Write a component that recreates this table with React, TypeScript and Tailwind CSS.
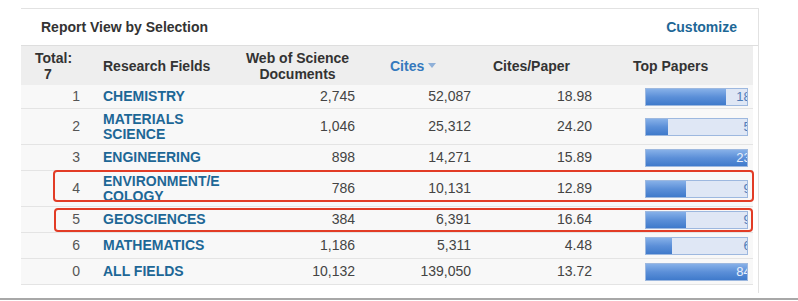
import React from "react";

interface FieldRow {
  idx: string;
  name: string[];
  docs: string;
  cites: string;
  perPaper: string;
  top: string;
  fill: number;
  height: string;
  mark?: "tall" | "short";
}

const rows: FieldRow[] = [
  { idx: "1", name: ["CHEMISTRY"], docs: "2,745", cites: "52,087", perPaper: "18.98", top: "184", fill: 80, height: "h-[24px]" },
  { idx: "2", name: ["MATERIALS", "SCIENCE"], docs: "1,046", cites: "25,312", perPaper: "24.20", top: "55", fill: 22, height: "h-[36px]" },
  { idx: "3", name: ["ENGINEERING"], docs: "898", cites: "14,271", perPaper: "15.89", top: "238", fill: 103, height: "h-[26px]" },
  { idx: "4", name: ["ENVIRONMENT/E", "COLOGY"], docs: "786", cites: "10,131", perPaper: "12.89", top: "91", fill: 40, height: "h-[36px]", mark: "tall" },
  { idx: "5", name: ["GEOSCIENCES"], docs: "384", cites: "6,391", perPaper: "16.64", top: "94", fill: 40, height: "h-[26px]", mark: "short" },
  { idx: "6", name: ["MATHEMATICS"], docs: "1,186", cites: "5,311", perPaper: "4.48", top: "65", fill: 26, height: "h-[26px]" },
  { idx: "0", name: ["ALL FIELDS"], docs: "10,132", cites: "139,050", perPaper: "13.72", top: "841", fill: 103, height: "h-[26px]" },
];

const cols = "grid grid-cols-[65px_154px_120px_120px_120px_153px]";

const Bar = ({ fill, label }: { fill: number; label: string }) => (
  <div className="relative h-[18px] w-[103px] overflow-hidden border border-[#9db8df] bg-[#dfe7f5]">
    <div
      className="absolute left-0 top-0 h-full bg-gradient-to-b from-[#86b0e8] via-[#5b8fd8] to-[#3f7acb]"
      style={{ width: fill }}
    />
    <div className="absolute left-0 top-0 flex h-full w-[112px] items-center justify-end text-[13px] leading-none">
      <span className={fill >= 100 ? "text-[#e8f0fb]" : "text-[#4f7cb8]"}>{label}</span>
    </div>
  </div>
);

export default function App() {
  return (
    <div className="h-[301px] w-[798px] overflow-hidden bg-white font-['Liberation_Sans',Arial,sans-serif]">
      <div className="ml-[21px] mt-[8px] h-[285px] w-[738px] border-r border-t border-[#e2e2e2]">
        <div className="flex h-[37px] items-center justify-between border-b border-[#dedede] pl-[20px] pr-[21px]">
          <span className="text-[14px] font-bold text-[#333]">Report View by Selection</span>
          <span className="text-[14px] font-bold text-[#1d6796]">Customize</span>
        </div>

        <div className="w-[732px]">
          <div className={`${cols} h-[39px] items-center bg-[#eeeeee] text-[14px] font-bold leading-[16px] text-[#333]`}>
            <div className="pl-[14px]">
              <div>Total:</div>
              <div className="pl-[9px]">7</div>
            </div>
            <div className="pl-[17px]">Research Fields</div>
            <div className="pr-[5px] text-center">
              <div>Web of Science</div>
              <div>Documents</div>
            </div>
            <div className="flex items-center pl-[30px] text-[#3579bd]">
              Cites
              <svg width="8" height="5" viewBox="0 0 8 5" className="ml-[4px]">
                <path d="M0 0h8L4 5z" fill="#8fb0d8" />
              </svg>
            </div>
            <div className="pl-[13px]">Cites/Paper</div>
            <div className="pl-[33px]">Top Papers</div>
          </div>

          {rows.map((r) => (
            <div
              key={r.idx}
              className={`${cols} ${r.height} relative items-center border-b border-[#e4e4e4] bg-[#f8f8f8] text-[14px] text-[#444]`}
            >
              <div className="pr-[6px] text-right text-[#555]">{r.idx}</div>
              <div className="pl-[17px] text-[14px] font-bold uppercase leading-[15px] text-[#1d6796]">
                {r.name.map((n) => (
                  <div key={n}>{n}</div>
                ))}
              </div>
              <div className="pr-[5px] text-right">{r.docs}</div>
              <div className="pr-[9px] text-right">{r.cites}</div>
              <div className="pr-[8px] text-right">{r.perPaper}</div>
              <div className="pl-[45px]">
                <Bar fill={r.fill} label={r.top} />
              </div>
              {r.mark === "tall" && (
                <div className="pointer-events-none absolute bottom-[4px] left-[32px] right-[-1px] top-[-1px] rounded-[4px] border-2 border-[#e23c26]" />
              )}
              {r.mark === "short" && (
                <div className="pointer-events-none absolute bottom-[0px] left-[33px] right-[0px] top-[1px] rounded-[4px] border-2 border-[#e23c26]" />
              )}
            </div>
          ))}
        </div>
      </div>
      <div className="mt-[5px] h-[2px] w-full bg-[#a8a8a8]" />
    </div>
  );
}
